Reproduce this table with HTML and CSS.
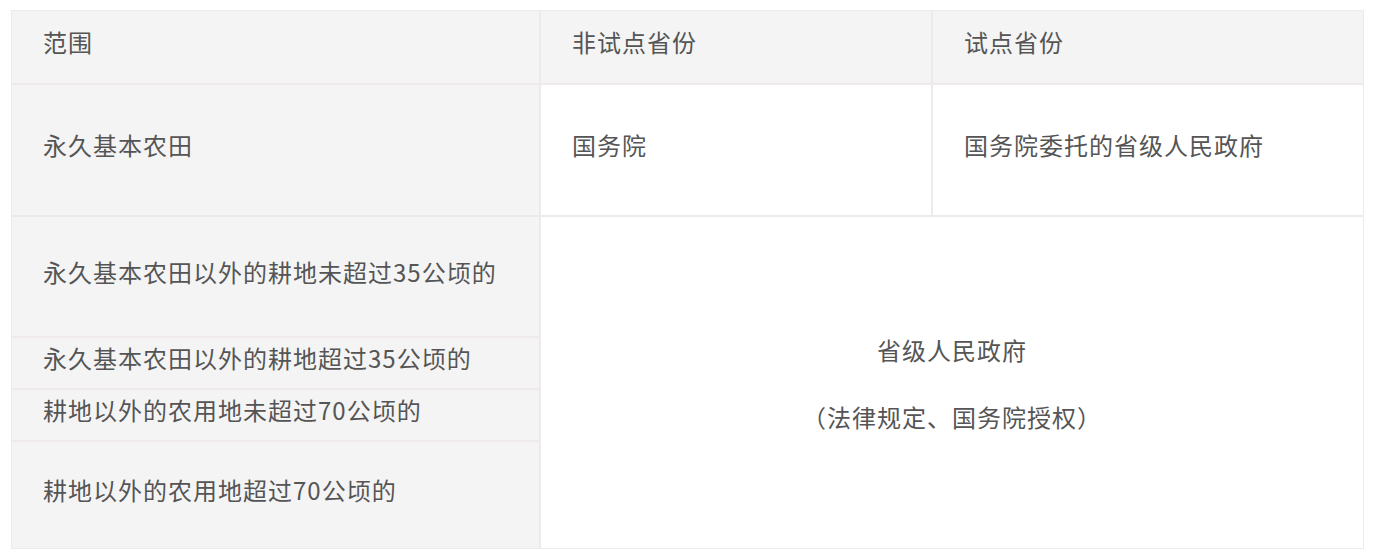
FILE: index.html
```html
<!DOCTYPE html>
<html lang="zh-CN">
<head>
<meta charset="utf-8">
<title>审批权限</title>
<link rel="stylesheet" href="styles.css">
</head>
<body>
<div class="wrap">
  <table class="grid">
    <colgroup>
      <col class="c1">
      <col class="c2">
      <col class="c3">
    </colgroup>
    <tr class="r-head">
      <td class="shade">范围</td>
      <td class="shade">非试点省份</td>
      <td class="shade">试点省份</td>
    </tr>
    <tr class="r-2">
      <td class="shade">永久基本农田</td>
      <td>国务院</td>
      <td>国务院委托的省级人民政府</td>
    </tr>
    <tr class="r-3">
      <td class="shade">永久基本农田以外的耕地未超过35公顷的</td>
      <td class="merged" colspan="2" rowspan="4">
        <p>省级人民政府</p>
        <p class="second">（法律规定、国务院授权）</p>
      </td>
    </tr>
    <tr class="r-4">
      <td class="shade">永久基本农田以外的耕地超过35公顷的</td>
    </tr>
    <tr class="r-5">
      <td class="shade">耕地以外的农用地未超过70公顷的</td>
    </tr>
    <tr class="r-6">
      <td class="shade">耕地以外的农用地超过70公顷的</td>
    </tr>
  </table>
</div>
</body>
</html>
```
FILE: styles.css
```css
html, body {
  margin: 0;
  padding: 0;
  background: #ffffff;
}

.wrap {
  padding: 10px 0 0 11px;
}

.grid {
  border-collapse: separate;
  border-spacing: 0;
  table-layout: fixed;
  width: 1353px;
  font-family: "Noto Sans CJK SC", "Noto Sans", sans-serif;
  font-size: 24px;
  letter-spacing: 1px;
  color: #555555;
}

.c1 { width: 529px; }
.c2 { width: 392px; }
.c3 { width: 432px; }

.grid td {
  border: 1px solid #eeeaea;
  padding: 0 0 10px 31px;
  vertical-align: middle;
  background: #ffffff;
  line-height: 30px;
  white-space: nowrap;
}

.grid td.shade {
  background: #f4f4f4;
}

.r-head { height: 74px; }
.r-2 { height: 132px; }
.r-3 { height: 121px; }
.r-4 { height: 52px; }
.r-5 { height: 52px; }
.r-6 { height: 108px; }

.grid td.merged {
  padding: 2px 0 0 0;
  text-align: center;
}

.merged p {
  margin: 0;
  line-height: 34px;
}

.merged p.second {
  margin-top: 33px;
}
```
